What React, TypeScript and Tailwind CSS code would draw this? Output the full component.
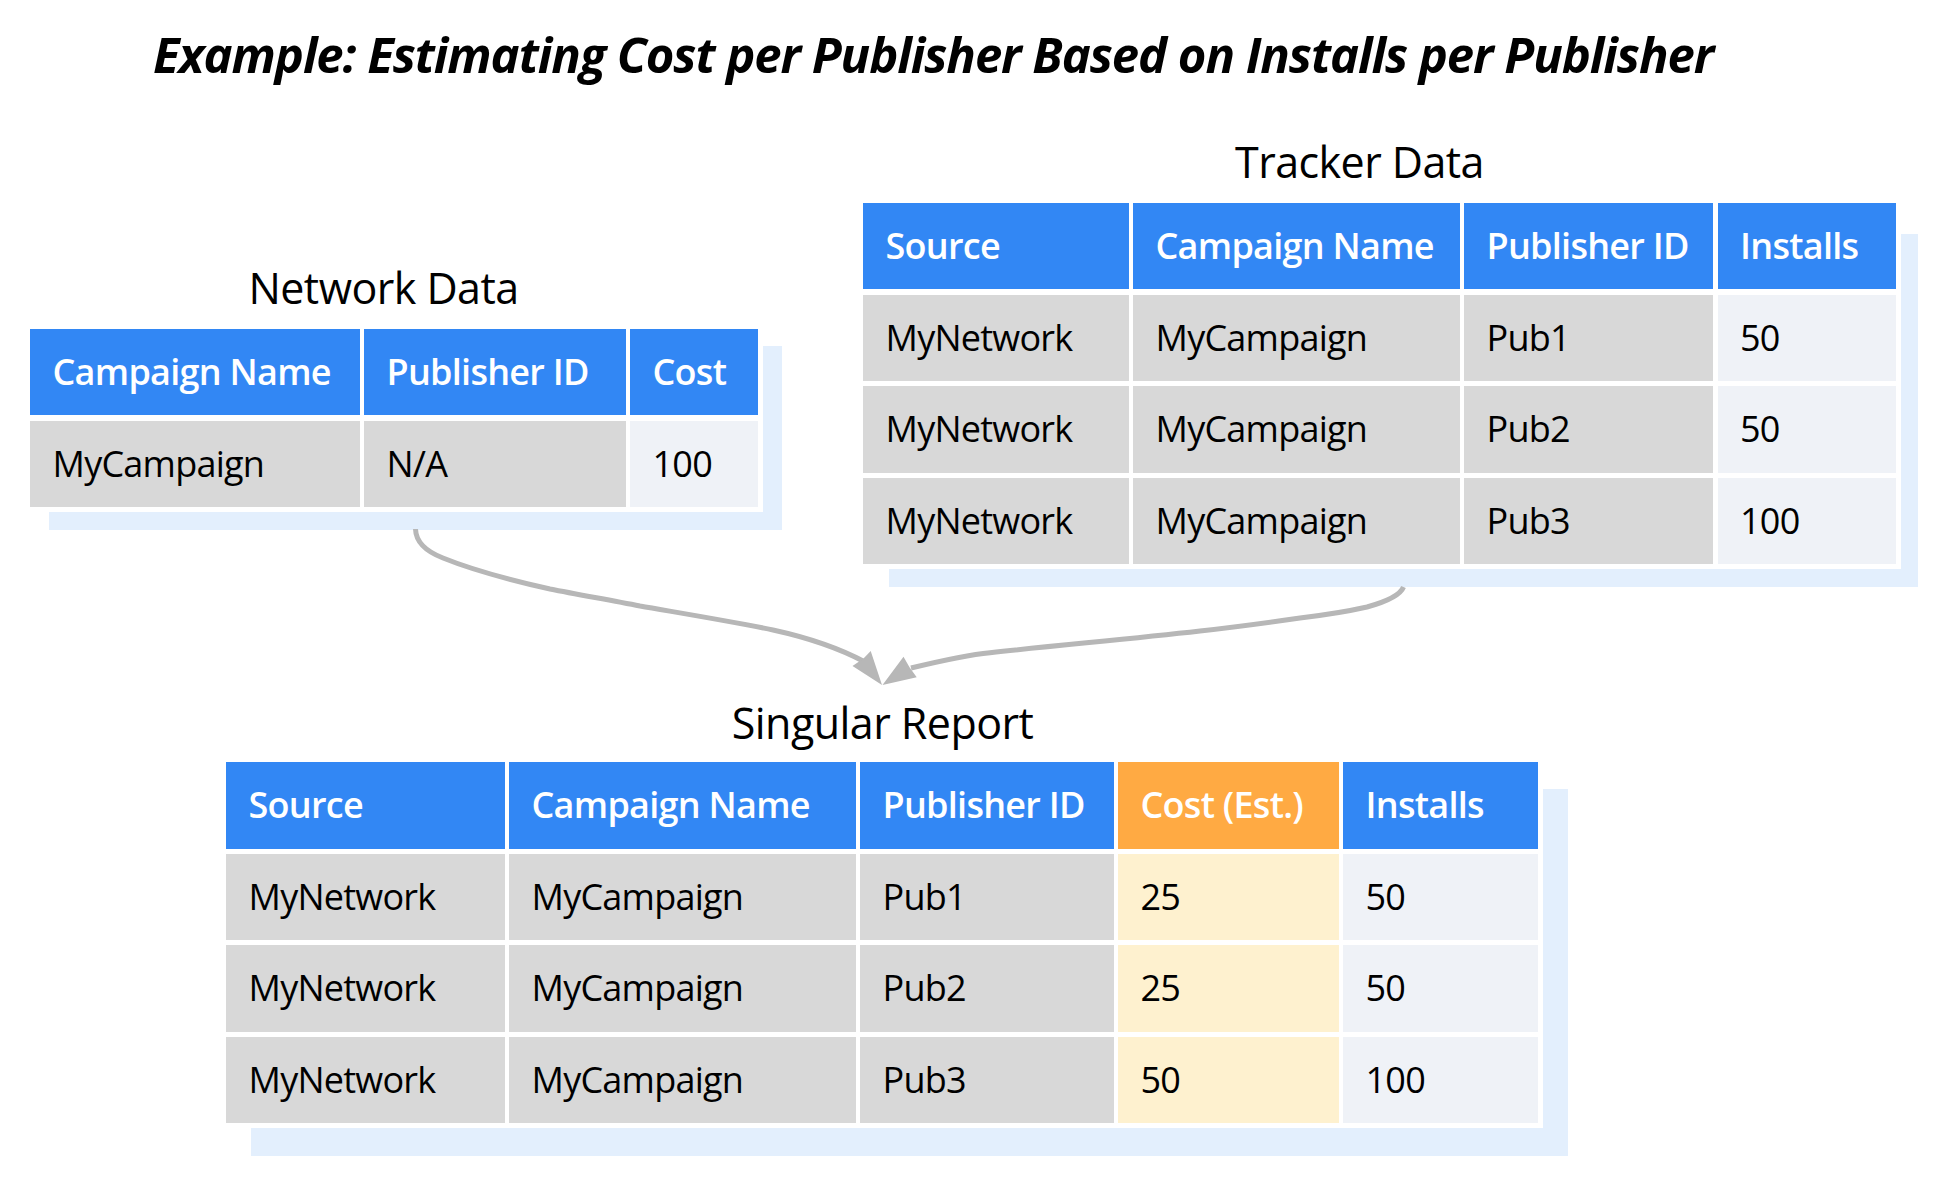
const FONT = "font-['Open_Sans','Noto_Sans',sans-serif]";

type TableProps = {
  cols: string;
  backdrop: string;
  header: string[];
  rows: string[][];
  accent?: number;
  light: number;
};

function DataTable({ cols, backdrop, header, rows, accent, light }: TableProps) {
  return (
    <div className="relative">
      <div className={`absolute bg-[#e3effd] ${backdrop}`} />
      <div className="relative bg-white pr-[5px] pb-[5px]">
        <div className={`grid gap-x-[4.5px] gap-y-[5.2px] ${cols}`}>
          {header.map((h, i) => (
            <div
              key={h}
              className={`flex h-[86.4px] items-center pl-[22.5px] text-[36px] font-semibold tracking-[-0.72px] text-white ${
                i === accent ? "bg-[#ffaa43]" : "bg-[#3287f4]"
              }`}
            >
              {h}
            </div>
          ))}
          {rows.flatMap((row, r) =>
            row.map((c, i) => (
              <div
                key={`${r}-${i}`}
                className={`flex h-[86.4px] items-center pl-[22.5px] text-[36px] tracking-[-0.75px] text-black ${
                  i === accent ? "bg-[#fef1cf]" : i === light ? "bg-[#eff2f7]" : "bg-[#d8d8d8]"
                }`}
              >
                {c}
              </div>
            )),
          )}
        </div>
      </div>
    </div>
  );
}

export default function App() {
  return (
    <div className={`relative h-[1184px] w-[1946px] overflow-hidden bg-white ${FONT}`}>
      <h1 className="pt-[21px] pl-[153px] text-[49px] leading-[67px] font-bold tracking-[-1.06px] text-black italic">
        Example: Estimating Cost per Publisher Based on Installs per Publisher
      </h1>

      <div className="mt-[46px] flex items-start">
        <section className="mt-[126px] ml-[30px] w-[733px]">
          <h2 className="mr-[26px] mb-[14px] h-[55px] text-center text-[43px] leading-[55px] tracking-[-0.55px] text-black">Network Data</h2>
          <DataTable
            cols="grid-cols-[329.5px_261.5px_128px]"
            backdrop="top-[17px] left-[19px] h-[184px] w-[733px]"
            header={["Campaign Name", "Publisher ID", "Cost"]}
            rows={[["MyCampaign", "N/A", "100"]]}
            light={2}
          />
        </section>
        <section className="ml-[100px] w-[1038px]">
          <h2 className="mr-[45px] mb-[14px] h-[55px] text-center text-[43px] leading-[55px] tracking-[-0.55px] text-black">Tracker Data</h2>
          <DataTable
            cols="grid-cols-[265.5px_326.5px_249px_178.5px]"
            backdrop="top-[31px] left-[26px] h-[353px] w-[1029px]"
            header={["Source", "Campaign Name", "Publisher ID", "Installs"]}
            rows={[
              ["MyNetwork", "MyCampaign", "Pub1", "50"],
              ["MyNetwork", "MyCampaign", "Pub2", "50"],
              ["MyNetwork", "MyCampaign", "Pub3", "100"],
            ]}
            light={3}
          />
        </section>
      </div>

      <section className="mt-[126px] ml-[226px] w-[1317px]">
        <h2 className="mr-[4px] mb-[12px] h-[55px] text-center text-[43px] leading-[55px] tracking-[-0.55px] text-black">Singular Report</h2>
        <DataTable
          cols="grid-cols-[278.5px_346.5px_253.5px_220.5px_195px]"
          backdrop="top-[27px] left-[25px] h-[367px] w-[1317px]"
          header={["Source", "Campaign Name", "Publisher ID", "Cost (Est.)", "Installs"]}
          rows={[
            ["MyNetwork", "MyCampaign", "Pub1", "25", "50"],
            ["MyNetwork", "MyCampaign", "Pub2", "25", "50"],
            ["MyNetwork", "MyCampaign", "Pub3", "50", "100"],
          ]}
          accent={3}
          light={4}
        />
      </section>

      <svg className="absolute top-0 left-0" width="1946" height="1184" viewBox="0 0 1946 1184" fill="none">
        <path
          d="M415.5 529 C416 545 430 553 443 558 C475 571 510 580 550 589 C580 595 610 600 640 606 C680 613 735 622 773 630 C805 637 835 646 865 662"
          stroke="#b7b7b7"
          strokeWidth="5"
        />
        <path
          d="M1403.5 587 C1400 596 1385 602 1367 607 C1345 612 1325 615 1300 618 C1265 623 1235 627 1200 631 C1130 639 1060 645 990 652.7 C965 655 940 661 911 668"
          stroke="#b7b7b7"
          strokeWidth="5"
        />
        <polygon points="882,685 852.5,666 863.5,658.5 870.7,651" fill="#b7b7b7" />
        <polygon points="882.5,685 903.5,656.7 909.5,667.3 916.7,677.3" fill="#b7b7b7" />
      </svg>
    </div>
  );
}
